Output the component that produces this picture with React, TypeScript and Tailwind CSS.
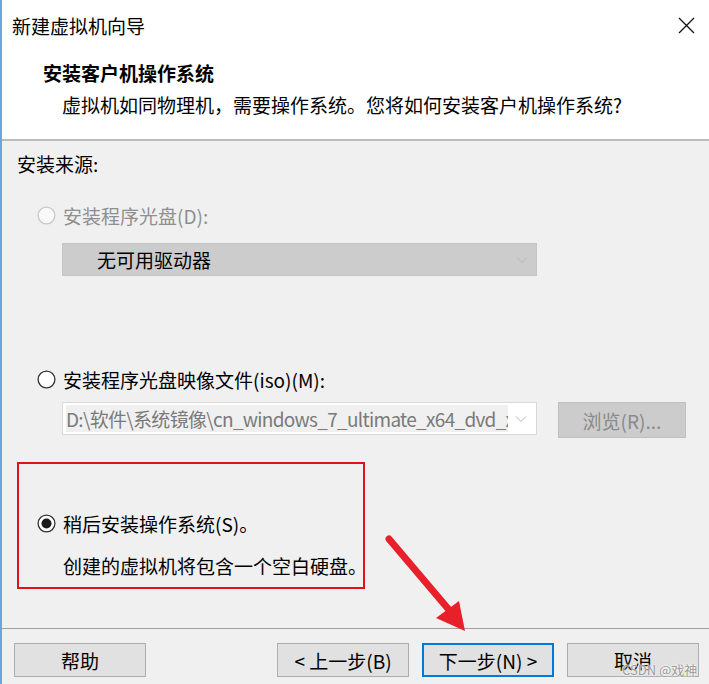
import React from "react";

const font = { fontFamily: '"Noto Sans CJK SC", "Noto Sans", sans-serif' };

function Radio({ state }: { state: "disabled" | "off" | "on" }) {
  const stroke = state === "disabled" ? "#c8c8c8" : "#333333";
  const fill = state === "disabled" ? "#f9f9f9" : "#ffffff";
  return (
    <svg width="19" height="19" viewBox="0 0 19 19" className="shrink-0">
      <circle cx="9.5" cy="9.5" r="8.4" fill={fill} stroke={stroke} strokeWidth="1.3" />
      {state === "on" && <circle cx="9.5" cy="9.5" r="5" fill="#1a1a1a" />}
    </svg>
  );
}

function Chevron({ color }: { color: string }) {
  return (
    <svg width="12" height="8" viewBox="0 0 12 8">
      <path d="M1 1.5 L6 6.5 L11 1.5" fill="none" stroke={color} strokeWidth="1" />
    </svg>
  );
}

function Btn({ label, primary }: { label: string; primary?: boolean }) {
  return (
    <div
      className={
        "w-[132px] h-[34px] flex items-center justify-center text-[19px] leading-none text-black bg-[#e1e1e1] " +
        (primary ? "border-2 border-[#0078d7]" : "border border-[#adadad]")
      }
    >
      {label}
    </div>
  );
}

export default function App() {
  return (
    <div
      className="relative w-[709px] h-[684px] bg-[#f0f0f0] border-l-2 border-[#6aa5e0] flex flex-col overflow-hidden"
      style={font}
    >
      {/* Title bar */}
      <div className="h-[50px] bg-white flex items-center justify-between pl-[10px] pr-[14px] shrink-0">
        <span className="text-[19px] leading-none text-black">新建虚拟机向导</span>
        <svg width="17" height="17" viewBox="0 0 17 17">
          <path d="M1 1 L16 16 M16 1 L1 16" stroke="#111" strokeWidth="1.3" />
        </svg>
      </div>
      {/* Header */}
      <div className="h-[89px] bg-white flex flex-col shrink-0">
        <div className="pl-[41px] pt-[10px] h-[26px] text-[19px] leading-[26px] font-bold text-black">
          安装客户机操作系统
        </div>
        <div className="pl-[60px] pt-[16px] text-[19px] leading-[26px] text-black">
          虚拟机如同物理机，需要操作系统。您将如何安装客户机操作系统?
        </div>
      </div>
      <div className="h-[2px] bg-[#bcbcbc] shrink-0" />

      {/* Body */}
      <div className="flex flex-col flex-1">
        <div className="h-[44px] flex items-center pl-[15px] text-[19px] leading-none text-black">安装来源:</div>

        <div className="mt-[15px] h-[30px] flex items-center pl-[35px] gap-[7px]">
          <Radio state="disabled" />
          <span className="text-[19px] leading-none text-[#8f8f8f]">安装程序光盘(D):</span>
        </div>

        <div className="mt-[13px] ml-[60px] w-[475px] h-[33px] bg-[#cccccc] border border-[#c4c4c4] flex items-center justify-between pl-[34px] pr-[8px]">
          <span className="text-[19px] leading-none text-black">无可用驱动器</span>
          <Chevron color="#b5b5b5" />
        </div>

        <div className="mt-[88px] h-[30px] flex items-center pl-[35px] gap-[7px]">
          <Radio state="off" />
          <span className="text-[19px] leading-none text-black">安装程序光盘映像文件(iso)(M):</span>
        </div>

        <div className="mt-[8px] flex items-start">
          <div className="ml-[60px] w-[475px] h-[33px] bg-white border border-[#d9d9d9] flex items-center justify-between pl-[3px] pr-[9px]">
            <div className="w-[442px] h-[27px] overflow-hidden bg-[#f0f0f0] flex items-center">
              <span className="text-[19px] leading-none text-[#7a7a7a] whitespace-nowrap tracking-[-0.7px]">
                D:\软件\系统镜像\cn_windows_7_ultimate_x64_dvd_x
              </span>
            </div>
            <Chevron color="#b5b5b5" />
          </div>
          <div className="ml-[21px] w-[128px] h-[36px] bg-[#cccccc] border border-[#bfbfbf] flex items-center justify-center text-[19px] leading-none text-[#8a8a8a]">
            浏览(R)...
          </div>
        </div>

        <div className="mt-[24px] ml-[15px] w-[348px] h-[127px] border-2 border-[#e3111b] flex flex-col">
          <div className="mt-[44px] h-[30px] flex items-center pl-[18px] gap-[7px]">
            <Radio state="on" />
            <span className="text-[19px] leading-none text-black whitespace-nowrap">稍后安装操作系统(S)。</span>
          </div>
          <div className="mt-[12px] h-[30px] flex items-center pl-[44px] text-[19px] leading-none text-black whitespace-nowrap">
            创建的虚拟机将包含一个空白硬盘。
          </div>
        </div>

        <div className="mt-[39px] h-[1px] bg-[#a0a0a0]" />

        <div className="mt-[14px] flex items-center pl-[12px]">
          <Btn label="帮助" />
          <div className="ml-[131px]">
            <Btn label="< 上一步(B)" />
          </div>
          <div className="ml-[13px]">
            <Btn label="下一步(N) >" primary />
          </div>
          <div className="ml-[13px]">
            <Btn label="取消" />
          </div>
        </div>
      </div>

      {/* Red arrow annotation */}
      <svg className="absolute left-0 top-0 pointer-events-none" width="709" height="684" viewBox="0 0 709 684">
        <line x1="387" y1="539" x2="448" y2="611" stroke="#e8202a" strokeWidth="7" strokeLinecap="round" />
        <polygon points="463,631 434,618 457,601" fill="#e8202a" />
      </svg>

      {/* Watermark */}
      <div
        className="absolute left-[620px] top-[663px] text-[13px] leading-none text-[#9a9a9a] whitespace-nowrap"
        style={{ textShadow: "0 0 2px #ffffff, 0 0 2px #ffffff" }}
      >
        CSDN @戏神
      </div>
    </div>
  );
}
